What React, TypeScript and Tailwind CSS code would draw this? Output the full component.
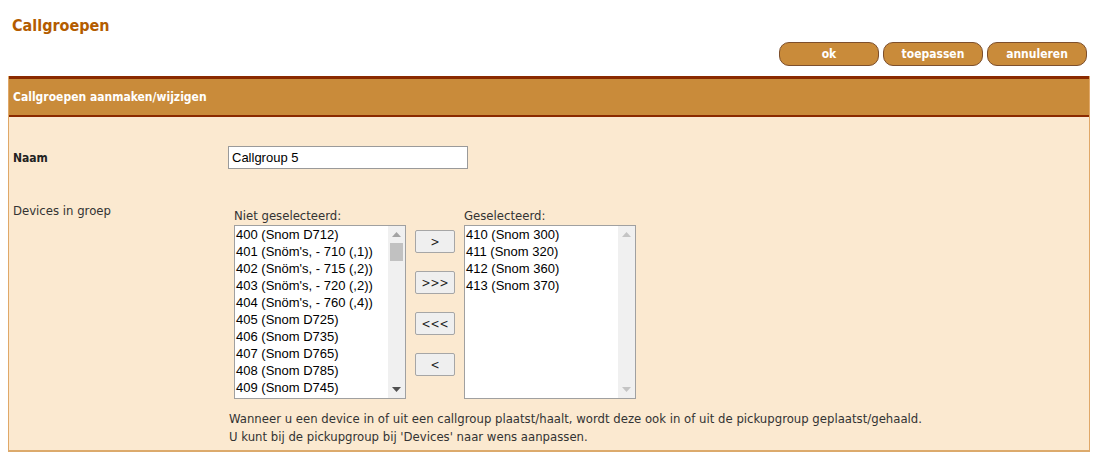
import React from "react";

const niet = [
  "400 (Snom D712)",
  "401 (Snöm's, - 710 (,1))",
  "402 (Snöm's, - 715 (,2))",
  "403 (Snöm's, - 720 (,2))",
  "404 (Snöm's, - 760 (,4))",
  "405 (Snom D725)",
  "406 (Snom D735)",
  "407 (Snom D765)",
  "408 (Snom D785)",
  "409 (Snom D745)",
];

const wel = ["410 (Snom 300)", "411 (Snom 320)", "412 (Snom 360)", "413 (Snom 370)"];

const ui = { fontFamily: '"DejaVu Sans Condensed", "DejaVu Sans", sans-serif' };
const arial = { fontFamily: '"Liberation Sans", Arial, sans-serif' };

function Scrollbar({ thumb }: { thumb: boolean }) {
  return (
    <div className="flex w-[17px] flex-col bg-[#f0f0f0]">
      <div className="flex h-[17px] items-center justify-center">
        <svg width="9" height="5" viewBox="0 0 9 5">
          <path d="M0 5 L4.5 0 L9 5 Z" fill={thumb ? "#a3a3a3" : "#c4c4c4"} />
        </svg>
      </div>
      <div className="flex-1 px-[2px]">
        {thumb && <div className="h-[18px] bg-[#c1c1c1]" />}
      </div>
      <div className="flex h-[17px] items-center justify-center">
        <svg width="9" height="5" viewBox="0 0 9 5">
          <path d="M0 0 L4.5 5 L9 0 Z" fill={thumb ? "#505050" : "#c4c4c4"} />
        </svg>
      </div>
    </div>
  );
}

function ListBox({ label, items, thumb }: { label: string; items: string[]; thumb: boolean }) {
  return (
    <div className="flex flex-col">
      <div className="mb-[2px] text-[13px] leading-[15px] text-[#333]" style={ui}>
        {label}
      </div>
      <div className="flex h-[174px] w-[172px] border border-[#a0a0a0] bg-white">
        <div className="flex-1 overflow-hidden pl-[1px] text-[13px] leading-[17px] text-black" style={arial}>
          {items.map((it) => (
            <div key={it} className="whitespace-nowrap">
              {it}
            </div>
          ))}
        </div>
        <Scrollbar thumb={thumb} />
      </div>
    </div>
  );
}

function MoveButton({ children }: { children: React.ReactNode }) {
  return (
    <button
      className="h-[23px] w-[40px] rounded-[2px] border border-[#a6a6a6] bg-[#efefef] text-[12px] leading-none text-[#222]"
      style={ui}
    >
      {children}
    </button>
  );
}

function ActionButton({ children }: { children: React.ReactNode }) {
  return (
    <button
      className="h-[24px] w-[100px] rounded-[10px] border border-[#7d4f2c] bg-[#c98b3a] text-[12px] font-bold leading-none text-white"
      style={ui}
    >
      {children}
    </button>
  );
}

export default function App() {
  return (
    <div className="h-[463px] w-[1100px] bg-white" style={ui}>
      <h1 className="pl-[12px] pt-[16px] text-[16px] font-bold leading-[20px] text-[#b35c00]" style={ui}>
        Callgroepen
      </h1>
      <div className="mr-[13px] mt-[6px] flex justify-end gap-[4px]">
        <ActionButton>ok</ActionButton>
        <ActionButton>toepassen</ActionButton>
        <ActionButton>annuleren</ActionButton>
      </div>

      <div className="ml-[8px] mt-[10px] w-[1082px] border-x border-b-2 border-x-[#e0a868] border-b-[#dcaa6c] bg-[#fbe9d0]">
        <div className="border-y-[#8b2a00] border-b-2 border-t-[3px] bg-[#c98b3a] px-[4px] text-[12px] font-bold leading-[36px] text-white">
          Callgroepen aanmaken/wijzigen
        </div>

        <div className="px-[4px] pb-[4px] pt-[29px]">
          <div className="flex items-center">
            <div className="w-[215px] text-[12px] font-bold text-[#222]">Naam</div>
            <div
              className="flex h-[23px] w-[240px] items-center border border-[#9a9a9a] bg-white px-[3px] text-[13px] text-black"
              style={arial}
            >
              Callgroup 5
            </div>
          </div>

          <div className="mt-[34px] flex">
            <div className="w-[215px] text-[13px] leading-[15px] text-[#333]">Devices in groep</div>
            <div className="flex flex-col pl-[6px] pt-[5px]">
              <div className="flex">
                <ListBox label="Niet geselecteerd:" items={niet} thumb />
                <div className="flex flex-col gap-[18px] px-[9px] pt-[22px]">
                  <MoveButton>&gt;</MoveButton>
                  <MoveButton>&gt;&gt;&gt;</MoveButton>
                  <MoveButton>&lt;&lt;&lt;</MoveButton>
                  <MoveButton>&lt;</MoveButton>
                </div>
                <ListBox label="Geselecteerd:" items={wel} thumb={false} />
              </div>
              <div className="-ml-[5px] mt-[11px] text-[13px] leading-[18px] text-[#333]">
                <p>Wanneer u een device in of uit een callgroup plaatst/haalt, wordt deze ook in of uit de pickupgroup geplaatst/gehaald.</p>
                <p>U kunt bij de pickupgroup bij 'Devices' naar wens aanpassen.</p>
              </div>
            </div>
          </div>
        </div>
      </div>
    </div>
  );
}
